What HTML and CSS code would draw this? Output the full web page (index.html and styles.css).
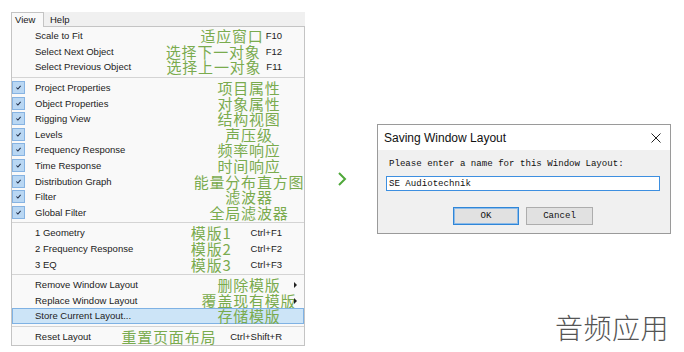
FILE: index.html
```html
<!DOCTYPE html>
<html>
<head>
<meta charset="utf-8">
<link rel="stylesheet" href="styles.css">
</head>
<body>
<div class="page">
  <div class="menu-wrap">
    <div class="menubar">
      <div class="tab open">View</div>
      <div class="tab">Help</div>
    </div>
    <div class="dropdown">
      <div class="row keyed"><span class="chk"></span><span class="lbl">Scale to Fit</span><span class="note g2">适应窗口</span><span class="key">F10</span></div>
      <div class="row keyed"><span class="chk"></span><span class="lbl">Select Next Object</span><span class="note g5">选择下一对象</span><span class="key">F12</span></div>
      <div class="row keyed"><span class="chk"></span><span class="lbl">Select Previous Object</span><span class="note g5">选择上一对象</span><span class="key">F11</span></div>
      <div class="sep"></div>
      <div class="row"><span class="chk on"><svg viewBox="0 0 13 13" width="13" height="13"><path d="M4 6.5 L5.8 8.3 L9 4.6" fill="none" stroke="#1d2a44" stroke-width="1.2"/></svg></span><span class="lbl">Project Properties</span><span class="note mid">项目属性</span></div>
      <div class="row"><span class="chk on"><svg viewBox="0 0 13 13" width="13" height="13"><path d="M4 6.5 L5.8 8.3 L9 4.6" fill="none" stroke="#1d2a44" stroke-width="1.2"/></svg></span><span class="lbl">Object Properties</span><span class="note mid">对象属性</span></div>
      <div class="row"><span class="chk on"><svg viewBox="0 0 13 13" width="13" height="13"><path d="M4 6.5 L5.8 8.3 L9 4.6" fill="none" stroke="#1d2a44" stroke-width="1.2"/></svg></span><span class="lbl">Rigging View</span><span class="note mid">结构视图</span></div>
      <div class="row"><span class="chk on"><svg viewBox="0 0 13 13" width="13" height="13"><path d="M4 6.5 L5.8 8.3 L9 4.6" fill="none" stroke="#1d2a44" stroke-width="1.2"/></svg></span><span class="lbl">Levels</span><span class="note mid">声压级</span></div>
      <div class="row"><span class="chk on"><svg viewBox="0 0 13 13" width="13" height="13"><path d="M4 6.5 L5.8 8.3 L9 4.6" fill="none" stroke="#1d2a44" stroke-width="1.2"/></svg></span><span class="lbl">Frequency Response</span><span class="note mid">频率响应</span></div>
      <div class="row"><span class="chk on"><svg viewBox="0 0 13 13" width="13" height="13"><path d="M4 6.5 L5.8 8.3 L9 4.6" fill="none" stroke="#1d2a44" stroke-width="1.2"/></svg></span><span class="lbl">Time Response</span><span class="note mid">时间响应</span></div>
      <div class="row"><span class="chk on"><svg viewBox="0 0 13 13" width="13" height="13"><path d="M4 6.5 L5.8 8.3 L9 4.6" fill="none" stroke="#1d2a44" stroke-width="1.2"/></svg></span><span class="lbl">Distribution Graph</span><span class="note mid">能量分布直方图</span></div>
      <div class="row"><span class="chk on"><svg viewBox="0 0 13 13" width="13" height="13"><path d="M4 6.5 L5.8 8.3 L9 4.6" fill="none" stroke="#1d2a44" stroke-width="1.2"/></svg></span><span class="lbl">Filter</span><span class="note mid">滤波器</span></div>
      <div class="row"><span class="chk on"><svg viewBox="0 0 13 13" width="13" height="13"><path d="M4 6.5 L5.8 8.3 L9 4.6" fill="none" stroke="#1d2a44" stroke-width="1.2"/></svg></span><span class="lbl">Global Filter</span><span class="note mid">全局滤波器</span></div>
      <div class="sep"></div>
      <div class="row keyed"><span class="chk"></span><span class="lbl">1 Geometry</span><span class="note g19">模版1</span><span class="key">Ctrl+F1</span></div>
      <div class="row keyed"><span class="chk"></span><span class="lbl">2 Frequency Response</span><span class="note g19">模版2</span><span class="key">Ctrl+F2</span></div>
      <div class="row keyed"><span class="chk"></span><span class="lbl">3 EQ</span><span class="note g19">模版3</span><span class="key">Ctrl+F3</span></div>
      <div class="sep"></div>
      <div class="row"><span class="chk"></span><span class="lbl">Remove Window Layout</span><span class="note mid">删除模版</span><span class="sub"></span></div>
      <div class="row"><span class="chk"></span><span class="lbl">Replace Window Layout</span><span class="note mid">覆盖现有模版</span><span class="sub"></span></div>
      <div class="row hl"><span class="chk"></span><span class="lbl">Store Current Layout...</span><span class="note mid">存储模版</span></div>
      <div class="sep"></div>
      <div class="row keyed"><span class="chk"></span><span class="lbl">Reset Layout</span><span class="note g14">重置页面布局</span><span class="key">Ctrl+Shift+R</span></div>
    </div>
  </div>

  <div class="arrow">
    <svg viewBox="0 0 10 16" width="10" height="16"><polyline points="2,2 8,8 2,14" fill="none" stroke="#4fa83a" stroke-width="2"/></svg>
  </div>

  <div class="right">
    <div class="dialog">
      <div class="titlebar">
        <span class="title">Saving Window Layout</span>
        <svg class="close" viewBox="0 0 10 10" width="10" height="10"><path d="M0.5 0.5 L9.5 9.5 M9.5 0.5 L0.5 9.5" stroke="#222" stroke-width="1" fill="none"/></svg>
      </div>
      <div class="dbody">
        <div class="prompt">Please enter a name for this Window Layout:</div>
        <div class="field">SE Audiotechnik</div>
        <div class="buttons">
          <div class="btn default">OK</div>
          <div class="btn">Cancel</div>
        </div>
      </div>
    </div>
    <div class="mark">音频应用</div>
  </div>
</div>
</body>
</html>
```

FILE: styles.css
```css
html, body {
  margin: 0;
  padding: 0;
  background: #fff;
}
body {
  width: 684px;
  height: 352px;
  overflow: hidden;
  font-family: "Liberation Sans", Arial, sans-serif;
}
.page {
  display: flex;
  align-items: flex-start;
  padding: 12px 0 0 11px;
}

/* ---------- menu ---------- */
.menu-wrap {
  width: 294px;
}
.menubar {
  height: 14px;
  background: #f0f0f0;
  display: flex;
  align-items: flex-end;
}
.tab {
  font-size: 9.5px;
  line-height: 13px;
  height: 13px;
  padding: 0 3px 0 4px;
  color: #1a1a1a;
}
.tab.open {
  width: 25px;
  padding: 0 3px;
  background: #f9f9f9;
  border: 1px solid #c4c4c4;
  border-bottom: none;
  margin-bottom: -1px;
  height: 14px;
  line-height: 13px;
  position: relative;
  z-index: 1;
}
.tab + .tab {
  margin-left: 2px;
}
.dropdown {
  background: #f9f9f9;
  border: 1px solid #c4c4c4;
  padding: 1px 0;
}
.row {
  position: relative;
  display: flex;
  align-items: center;
  height: 15.6px;
  font-size: 9.5px;
  color: #222;
  white-space: nowrap;
}
.row.keyed {
  padding-right: 22px;
}
.row.hl {
  background: #cce4f7;
  box-shadow: inset 0 0 0 1px #7fb2e4;
}
.chk {
  width: 13px;
  height: 13px;
  flex: none;
  box-sizing: border-box;
}
.chk.on {
  background: #b9d7f3;
  border: 1px solid #86b3e2;
  display: flex;
  align-items: center;
  justify-content: center;
}
.chk.on svg {
  width: 11px;
  height: 11px;
}
.lbl {
  flex: 1;
  margin-left: 10px;
}
.note {
  font-family: "Noto Sans CJK SC", sans-serif;
  font-size: 15px;
  letter-spacing: 0.8px;
  line-height: 15px;
  color: #7aab4e;
  white-space: nowrap;
}
.note.mid {
  width: 110px;
  display: flex;
  justify-content: center;
}
.note.g2 { margin-right: 2px; }
.note.g5 { margin-right: 5px; }
.note.g14 { margin-right: 14px; }
.note.g19 { margin-right: 19px; }
.key {
  font-size: 9.5px;
}
.sub {
  position: absolute;
  right: 7px;
  top: 5px;
  width: 0;
  height: 0;
  border-left: 3px solid #222;
  border-top: 3px solid transparent;
  border-bottom: 3px solid transparent;
}
.sep {
  height: 1px;
  background: #d4d4d4;
  margin: 2px 0;
}

/* ---------- arrow ---------- */
.arrow {
  margin: 159px 0 0 32px;
  width: 10px;
  height: 16px;
}
.arrow svg {
  display: block;
}

/* ---------- dialog ---------- */
.right {
  margin-left: 30px;
  display: flex;
  flex-direction: column;
  align-items: flex-end;
}
.dialog {
  margin-top: 112px;
  width: 294px;
  box-sizing: border-box;
  border: 1px solid #9a9a9a;
  background: #f0f0f0;
}
.titlebar {
  height: 25px;
  background: #fff;
  display: flex;
  align-items: center;
  justify-content: space-between;
  padding: 0 9px 0 6px;
}
.title {
  font-size: 12px;
  color: #111;
  font-family: "Liberation Sans", Arial, sans-serif;
}
.close {
  display: block;
}
.dbody {
  padding: 8px 10px 8px 8px;
  font-family: "Liberation Mono", monospace;
  font-size: 9.1px;
  color: #111;
}
.prompt {
  padding-left: 3px;
  line-height: 12px;
}
.field {
  margin-top: 6px;
  height: 15px;
  box-sizing: border-box;
  border: 1px solid #3d8fe0;
  background: #fff;
  padding-left: 2px;
  line-height: 13px;
}
.buttons {
  margin-top: 16px;
  display: flex;
  justify-content: center;
  gap: 7px;
}
.btn {
  width: 67px;
  height: 18px;
  box-sizing: border-box;
  border: 1px solid #adadad;
  background: #e1e1e1;
  text-align: center;
  line-height: 16px;
}
.btn.default {
  width: 66px;
  border: 1px solid #2f86d8;
  box-shadow: inset 0 0 0 1px #8dbbe8;
}

/* ---------- watermark ---------- */
.mark {
  margin-top: 77px;
  margin-right: 2px;
  font-family: "Noto Sans CJK SC", sans-serif;
  font-weight: 300;
  font-size: 28px;
  line-height: 32px;
  color: #555;
  letter-spacing: 0.5px;
}
```
